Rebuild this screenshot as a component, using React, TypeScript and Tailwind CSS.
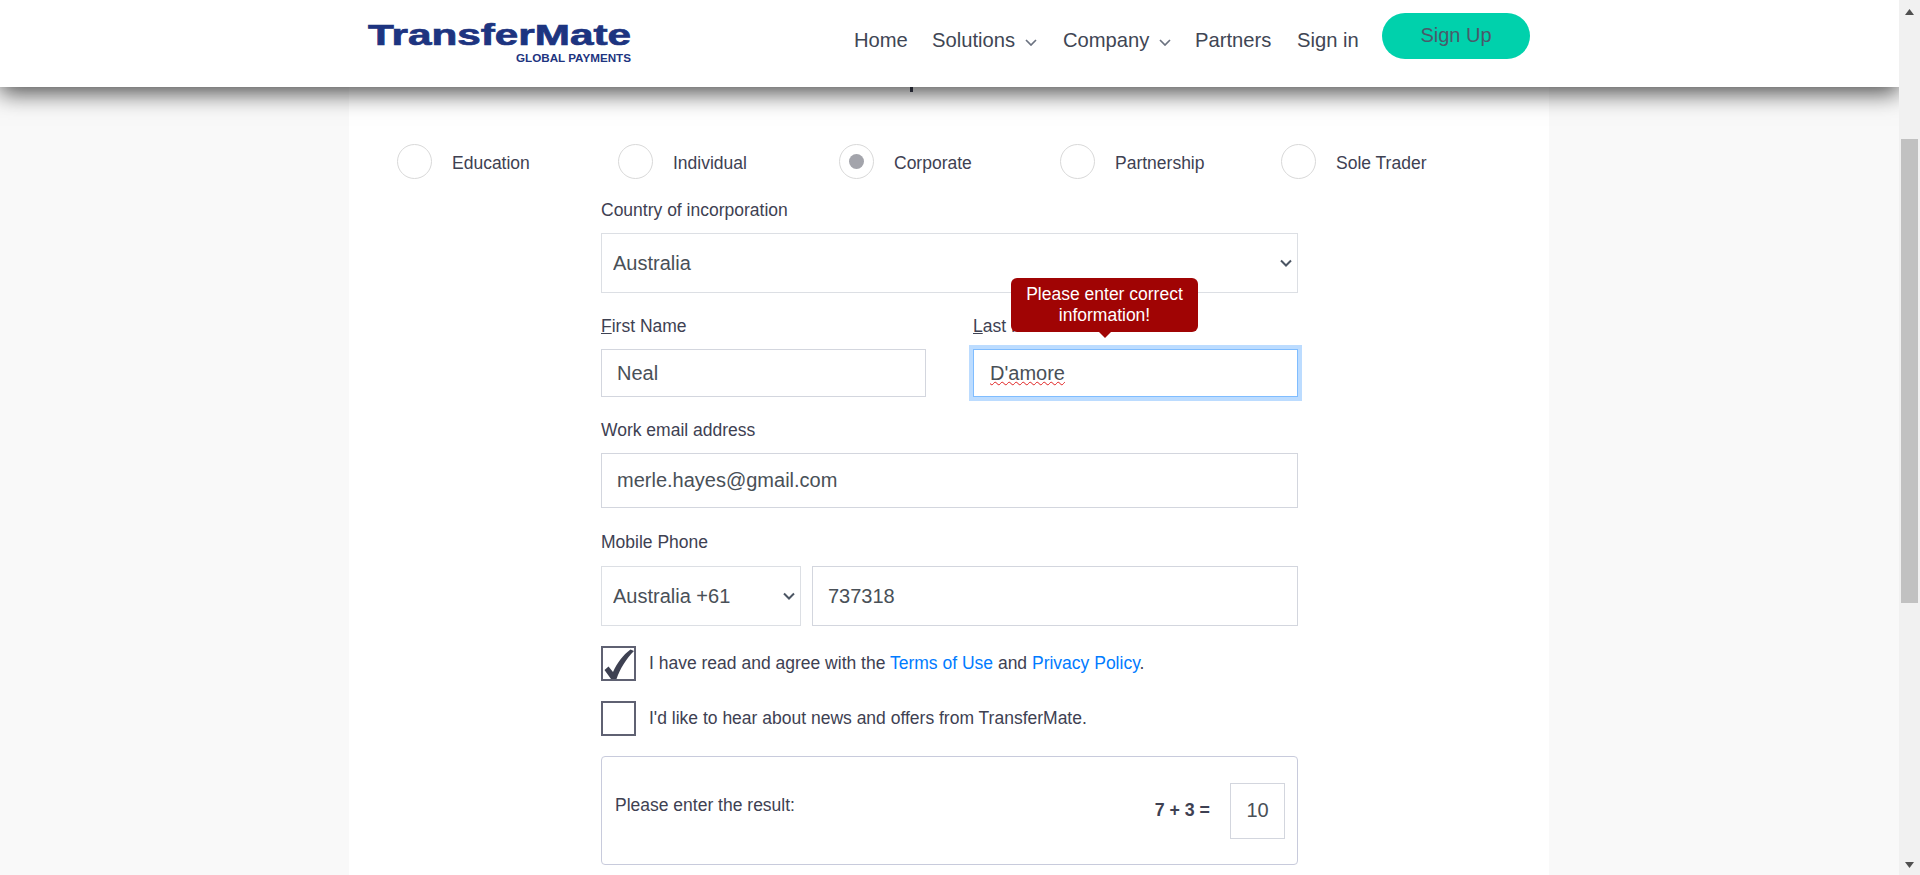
import React from "react";

const RADIOS = [
  { label: "Education", checked: false },
  { label: "Individual", checked: false },
  { label: "Corporate", checked: true },
  { label: "Partnership", checked: false },
  { label: "Sole Trader", checked: false },
];

const Chevron = () => (
  <svg width="12" height="7" viewBox="0 0 12 7" fill="none" stroke="#6b7280" strokeWidth="1.7" className="ml-[10px] mt-[5px]">
    <path d="M1 1l5 5 5-5" />
  </svg>
);

const Logo = () => (
  <svg width="270" height="42" viewBox="0 0 270 42" className="block overflow-visible">
    <text x="0" y="22" fill="#1d3480" stroke="#1d3480" strokeWidth="0.7" fontFamily="Liberation Sans" fontWeight="700" fontSize="29.5" textLength="263" lengthAdjust="spacingAndGlyphs">
      TransferMate
    </text>
    <text x="148" y="39" fill="#1d3480" fontFamily="Liberation Sans" fontWeight="700" fontSize="11.8" textLength="115" lengthAdjust="spacingAndGlyphs">
      GLOBAL PAYMENTS
    </text>
  </svg>
);

const Header = () => (
  <header className="relative z-20 flex h-[87px] shrink-0 bg-white pl-[368px] shadow-[0_6px_22px_rgba(0,0,0,0.7)]">
    <div className="pt-[23px]">
      <Logo />
    </div>
    <nav className="ml-[216px] flex h-[80px] items-center text-[20.2px] text-[#3f4654]">
      <a className="w-[78px]">Home</a>
      <a className="flex w-[131px] items-center">
        Solutions
        <Chevron />
      </a>
      <a className="flex w-[132px] items-center">
        Company
        <Chevron />
      </a>
      <a className="w-[102px]">Partners</a>
      <a className="w-[85px]">Sign in</a>
    </nav>
    <button className="mt-[13px] h-[46px] w-[148px] rounded-[23px] bg-[#00d1ac] pb-[2px] text-[20px] text-[#4a5a6a]">
      Sign Up
    </button>
  </header>
);

const Label = ({ children }: { children: React.ReactNode }) => (
  <label className="block h-[24px] text-[17.5px] leading-[24px] text-[#3e4152]">{children}</label>
);

const inputCls =
  "block w-full border border-[#d3d6de] bg-white pl-[15px] text-[20px] text-[#495057] outline-none";

const Select = ({ value, className }: { value: string; className: string }) => (
  <div className={`relative ${className}`}>
    <select
      className="block h-[60px] w-full appearance-none border border-[#dcdfe4] bg-white pl-[11px] text-[20px] text-[#495057] outline-none"
      defaultValue={value}
    >
      <option>{value}</option>
    </select>
    <svg width="12" height="8" viewBox="0 0 12 8" fill="none" stroke="#4b5563" strokeWidth="2" className="pointer-events-none absolute right-[6px] top-[26px]">
      <path d="M1 1.5l5 5 5-5" />
    </svg>
  </div>
);

const Checkbox = ({ checked, children }: { checked?: boolean; children: React.ReactNode }) => (
  <div className="mt-[20px] flex h-[35px] items-center">
    <div className="relative h-[35px] w-[35px] shrink-0 border-2 border-[#5f6172]">
      {checked && (
        <svg viewBox="0 0 35 35" className="absolute -left-[2px] -top-[2px] h-[35px] w-[35px]">
          <path d="M3.5 24L7.5 20.5L12 26C16 17 22 9 29.5 3.5L33 5C25 13 19 23 15.5 33H10Z" fill="#3e4152" />
        </svg>
      )}
    </div>
    <span className="ml-[13px] text-[17.5px] text-[#3e4152]">{children}</span>
  </div>
);

export default function App() {
  return (
    <div className="flex h-[875px] overflow-hidden bg-[#f9f9f9] font-['Liberation_Sans',Arial,sans-serif]">
      <div className="flex min-w-0 flex-1 flex-col">
        <Header />
        <main className="ml-[349px] h-[788px] w-[1200px] shrink-0 bg-white">
          {/* descender of the heading that sits behind the fixed header */}
          <div className="ml-[561px] h-[5px] w-[3px] bg-[#3e4152]" />
          <div className="ml-[48px] mt-[52px] grid grid-cols-[repeat(5,221px)]">
            {RADIOS.map((r) => (
              <div key={r.label} className="flex h-[35px] items-center">
                <span className="flex h-[35px] w-[35px] items-center justify-center rounded-full border border-[#d9d9d9]">
                  {r.checked && <span className="h-[15px] w-[15px] rounded-full bg-[#a3a4ab]" />}
                </span>
                <span className="ml-[20px] pt-[4px] text-[17.5px] text-[#3e4152]">{r.label}</span>
              </div>
            ))}
          </div>

          <form className="ml-[252px] mt-[19px] w-[697px]">
            <Label>Country of incorporation</Label>
            <Select value="Australia" className="mt-[11px]" />

            <div className="mt-[21px] grid grid-cols-[325px_325px] gap-x-[47px]">
              <div>
                <Label>
                  <span className="underline">F</span>irst Name
                </Label>
                <input className={`mt-[11px] h-[48px] ${inputCls}`} defaultValue="Neal" />
              </div>
              <div className="relative">
                <Label>
                  <span className="underline">L</span>ast Name
                </Label>
                <div className="mt-[11px] flex h-[48px] items-center border border-[#80bdff] bg-white pl-[16px] text-[20px] text-[#495057] shadow-[0_0_0_4px_#bcdcff]">
                  <span className="underline decoration-[#e02020] decoration-wavy decoration-1">D'amore</span>
                </div>
                <div className="absolute -top-[36px] left-[38px] z-10 w-[187px] rounded-[6px] bg-[#a00404] py-[6px] text-center text-[17.5px] leading-[21px] text-white">
                  Please enter correct information!
                  <span className="absolute -bottom-[6px] left-1/2 h-0 w-0 -translate-x-1/2 border-x-[6px] border-t-[6px] border-x-transparent border-t-[#a00404]" />
                </div>
              </div>
            </div>

            <div className="mt-[21px]">
              <Label>Work email address</Label>
              <input className={`mt-[11px] h-[55px] ${inputCls}`} defaultValue="merle.hayes@gmail.com" />
            </div>

            <div className="mt-[22px]">
              <Label>Mobile Phone</Label>
              <div className="mt-[12px] flex gap-x-[11px]">
                <Select value="Australia +61" className="w-[200px] shrink-0" />
                <input className={`h-[60px] ${inputCls}`} defaultValue="737318" />
              </div>
            </div>

            <Checkbox checked>
              I have read and agree with the <a className="text-[#007bff]">Terms of Use</a> and{" "}
              <a className="text-[#007bff]">Privacy Policy</a>.
            </Checkbox>
            <Checkbox>I'd like to hear about news and offers from TransferMate.</Checkbox>

            <div className="mt-[20px] flex h-[109px] items-center rounded-[4px] border border-[#c8cbdc] pl-[13px] pr-[12px]">
              <span className="mb-[10px] text-[17.5px] text-[#3e4152]">Please enter the result:</span>
              <b className="ml-auto text-[17.8px] text-[#3e4152]">7 + 3 =</b>
              <input
                className="ml-[20px] h-[56px] w-[55px] border border-[#d3d6de] text-center text-[20px] text-[#495057] outline-none"
                defaultValue="10"
              />
            </div>
          </form>
        </main>
      </div>

      <aside className="relative z-30 flex w-[21px] shrink-0 flex-col items-center bg-[#f1f1f1]">
        <svg width="9" height="6" viewBox="0 0 9 6" className="mt-[9px]">
          <path d="M4.5 0L9 6H0z" fill="#505050" />
        </svg>
        <div className="mt-[124px] h-[464px] w-[17px] bg-[#c1c1c1]" />
        <svg width="9" height="6" viewBox="0 0 9 6" className="mb-[7px] mt-auto">
          <path d="M4.5 6L0 0h9z" fill="#505050" />
        </svg>
      </aside>
    </div>
  );
}
